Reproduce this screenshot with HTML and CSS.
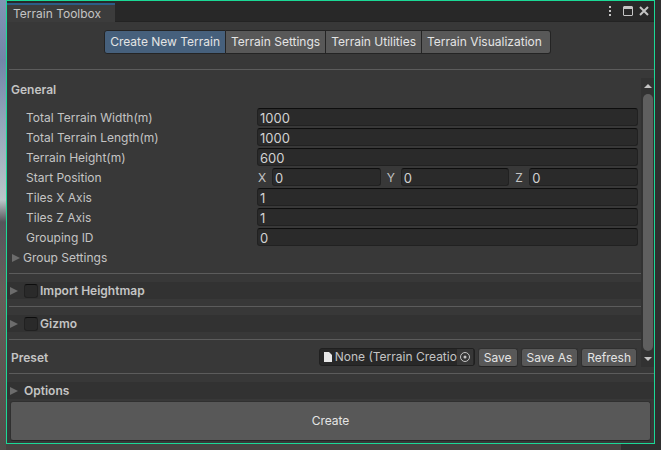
FILE: index.html
```html
<!DOCTYPE html>
<html lang="en">
<head>
<meta charset="utf-8">
<title>Terrain Toolbox</title>
<link rel="stylesheet" href="styles.css">
</head>
<body>
<main class="window">
  <header class="titlebar">
    <h1 class="tab">Terrain Toolbox</h1>
    <div class="window-actions">
      <button class="icon-button" aria-label="Menu"><svg width="4" height="12" viewBox="0 0 4 12"><path d="M1 1h2v2H1zM1 5h2v2H1zM1 9h2v2H1z"/></svg></button>
      <button class="icon-button" aria-label="Maximize"><svg width="10" height="10" viewBox="0 0 10 10"><path fill-rule="evenodd" d="M1 0h8l1 1v8l-1 1H1L0 9V1zM1 3v6h8V3z"/></svg></button>
      <button class="icon-button" aria-label="Close"><svg width="10" height="10" viewBox="0 0 10 10"><path class="stroke" d="M1 1l8 8M9 1L1 9"/></svg></button>
    </div>
  </header>

  <nav class="modes">
    <button class="mode mode-active">Create New Terrain</button>
    <button class="mode">Terrain Settings</button>
    <button class="mode">Terrain Utilities</button>
    <button class="mode">Terrain Visualization</button>
  </nav>
  <hr class="rule">

  <div class="scroll-area">
    <div class="content">
      <h2 class="heading">General</h2>
      <div class="fields">
        <label class="label" for="width">Total Terrain Width(m)</label>
        <input class="field" id="width" value="1000">
        <label class="label" for="length">Total Terrain Length(m)</label>
        <input class="field" id="length" value="1000">
        <label class="label" for="height">Terrain Height(m)</label>
        <input class="field" id="height" value="600">
        <span class="label">Start Position</span>
        <div class="vector">
          <label class="axis"><span class="axis-name">X</span><input class="field" value="0"></label>
          <label class="axis"><span class="axis-name">Y</span><input class="field" value="0"></label>
          <label class="axis"><span class="axis-name">Z</span><input class="field" value="0"></label>
        </div>
        <label class="label" for="tiles-x">Tiles X Axis</label>
        <input class="field" id="tiles-x" value="1">
        <label class="label" for="tiles-z">Tiles Z Axis</label>
        <input class="field" id="tiles-z" value="1">
        <label class="label" for="group-id">Grouping ID</label>
        <input class="field" id="group-id" value="0">
      </div>
      <button class="foldout"><svg class="arrow" width="8" height="10" viewBox="0 0 8 10"><path d="M0 1l8 4-8 4z"/></svg>Group Settings</button>
      <hr class="rule">
      <div class="section">
        <button class="icon-button" aria-label="Expand Import Heightmap"><svg class="arrow" width="8" height="10" viewBox="0 0 8 10"><path d="M0 1l8 4-8 4z"/></svg></button>
        <input class="check" type="checkbox" id="import">
        <label for="import">Import Heightmap</label>
      </div>
      <hr class="rule">
      <div class="section">
        <button class="icon-button" aria-label="Expand Gizmo"><svg class="arrow" width="8" height="10" viewBox="0 0 8 10"><path d="M0 1l8 4-8 4z"/></svg></button>
        <input class="check" type="checkbox" id="gizmo">
        <label for="gizmo">Gizmo</label>
      </div>
      <hr class="rule">
      <div class="preset">
        <h2 class="preset-title">Preset</h2>
        <button class="object-field">
          <svg class="file" width="8" height="10" viewBox="0 0 8 10"><path d="M0 0h5l3 3v7H0z"/></svg>
          <span class="object-name">None (Terrain Creatio</span>
          <span class="picker"><svg width="12" height="12" viewBox="0 0 12 12"><circle class="stroke-thin" cx="6" cy="6" r="4.5"/><circle cx="6" cy="6" r="1.5"/></svg></span>
        </button>
        <button class="button">Save</button>
        <button class="button">Save As</button>
        <button class="button">Refresh</button>
      </div>
    </div>
    <div class="scrollbar">
      <button class="icon-button scroll-step" aria-label="Scroll up"><svg width="8" height="4" viewBox="0 0 8 4"><path d="M0 4l4-4 4 4z"/></svg></button>
      <div class="thumb"></div>
      <button class="icon-button scroll-step" aria-label="Scroll down"><svg width="8" height="4" viewBox="0 0 8 4"><path d="M0 0h8L4 4z"/></svg></button>
    </div>
  </div>
  <hr class="rule rule-footer">
  <button class="section section-wide"><svg class="arrow" width="8" height="10" viewBox="0 0 8 10"><path d="M0 1l8 4-8 4z"/></svg>Options</button>
  <button class="create">Create</button>
</main>
</body>
</html>
```
FILE: styles.css
```css
* {
  box-sizing: border-box;
}

html {
  min-height: 100%;
  background:
    linear-gradient(#2f2f2f, #2f2f2f) right / 40px 100% no-repeat,
    linear-gradient(90deg, transparent 6px, #484341 6px) left bottom / 100% 6px no-repeat,
    linear-gradient(#8195b5 0, #7186a8 60px, #91a5b9 120px, #bac6c9 200px, #55555a 222px, #5c5a5c 250px, #645f59 290px, #514d4a 450px);
}

body {
  margin: 0;
  padding: 0 6px 6px;
  color: #c4c4c4;
  font: 12px/16px Inter, "Liberation Sans", sans-serif;
}

button,
input {
  margin: 0;
  color: inherit;
  font: inherit;
}

svg {
  display: block;
  flex: none;
  fill: #c4c4c4;
}

.window {
  display: flex;
  flex-direction: column;
  border: 1px solid #1bd996;
  background: #383838;
}

.titlebar {
  display: flex;
  justify-content: space-between;
  height: 21px;
  padding-top: 2px;
  border-bottom: 1px solid #232323;
  background: #282828;
}

.tab {
  height: 19px;
  margin: 0;
  padding: 1px 14px 0 6px;
  border-top: 2px solid #2c5d87;
  background: #3c3c3c;
  font-size: 12px;
  font-weight: 400;
}

.window-actions {
  display: flex;
  align-items: center;
  gap: 6px;
  padding: 0 5px 2px 0;
}

.window-actions .icon-button:first-child {
  margin-right: 5px;
}

.icon-button {
  padding: 0;
  border: 0;
  background: none;
}

.stroke {
  fill: none;
  stroke: #c4c4c4;
  stroke-width: 2;
}

.stroke-thin {
  fill: none;
  stroke: #c4c4c4;
}

.modes {
  display: flex;
  justify-content: center;
  padding: 8px 6px 15px 0;
}

.mode {
  height: 24px;
  padding: 0 5px;
  border: 1px solid #242424;
  border-left-width: 0;
  background: #585858;
  color: #e4e4e4;
}

.mode:first-child {
  border-left-width: 1px;
  border-radius: 3px 0 0 3px;
}

.mode:last-child {
  padding-right: 8px;
  border-radius: 0 3px 3px 0;
}

.mode-active {
  background: #46607c;
}

.rule {
  width: auto;
  height: 1px;
  margin: 0 0 8px 2px;
  border: 0;
  background: #5c5c5c;
}

.scroll-area {
  display: flex;
}

.content {
  flex: 1;
  min-width: 0;
}

.heading {
  margin: 0;
  padding: 4px 4px 10px;
  font-size: 12px;
  font-weight: 600;
}

.fields {
  display: grid;
  grid-template-columns: 231px 1fr;
  row-gap: 2px;
  padding: 0 3px 0 19px;
}

.label {
  height: 18px;
  line-height: 20px;
}

.field {
  width: 100%;
  min-width: 0;
  height: 18px;
  padding: 1px 2px 0;
  border: 1px solid #212121;
  border-top-color: #0d0d0d;
  border-radius: 3px;
  background: #2a2a2a;
  color: #d2d2d2;
  font-size: 13px;
}

.vector {
  display: grid;
  grid-template-columns: repeat(3, 1fr);
  gap: 5px;
  height: 18px;
}

.axis {
  display: flex;
}

.axis-name {
  flex: 0 0 15px;
  padding-left: 1px;
  line-height: 20px;
}

.foldout {
  display: flex;
  align-items: center;
  gap: 3px;
  height: 18px;
  margin: 3px 0 6px;
  padding: 0 5px;
  border: 0;
  background: none;
}

.arrow {
  fill: #6c6c6c;
}

.section {
  display: flex;
  align-items: center;
  height: 17px;
  margin-bottom: 7px;
  padding: 0 3px;
  border: 0;
  background: #323232;
  font-weight: 600;
}

.check {
  appearance: none;
  width: 14px;
  height: 14px;
  margin: 0 2px 0 6px;
  border: 1px solid #212121;
  border-top-color: #0d0d0d;
  border-radius: 3px;
  background: #2a2a2a;
}

.preset {
  display: flex;
  gap: 3px;
  height: 19px;
  padding-right: 4px;
}

.preset-title {
  flex: 1;
  margin: 0;
  padding-left: 4px;
  font-size: 12px;
  font-weight: 600;
  line-height: 20px;
}

.object-field {
  display: flex;
  align-items: center;
  width: 156px;
  height: 18px;
  padding: 0 1px 0 4px;
  border: 1px solid #202020;
  border-radius: 3px;
  background: #282828;
}

.file {
  fill: #e8e8e8;
}

.object-name {
  flex: 1;
  margin-left: 3px;
  text-align: left;
  white-space: nowrap;
}

.picker {
  padding: 2px 2px;
  background: #373737;
}

.button {
  height: 19px;
  padding: 0 5px;
  border: 1px solid #303030;
  border-bottom-color: #242424;
  border-radius: 3px;
  background: #585858;
  color: #e4e4e4;
}

.scrollbar {
  display: flex;
  flex-direction: column;
  width: 13px;
  padding: 0 1px 0 2px;
  background: #323232;
}

.scroll-step {
  display: flex;
  flex: 0 0 16px;
  align-items: center;
  justify-content: center;
}

.thumb {
  flex: 1;
  border-radius: 5px;
  background: #5f5f5f;
}

.rule-footer {
  margin-top: 6px;
}

.section-wide {
  gap: 6px;
  margin-bottom: 2px;
}

.create {
  height: 40px;
  margin: 0 3px 2px;
  padding: 0;
  border: 1px solid #303030;
  border-bottom-color: #242424;
  border-radius: 3px;
  background: #585858;
  color: #e4e4e4;
}
```
